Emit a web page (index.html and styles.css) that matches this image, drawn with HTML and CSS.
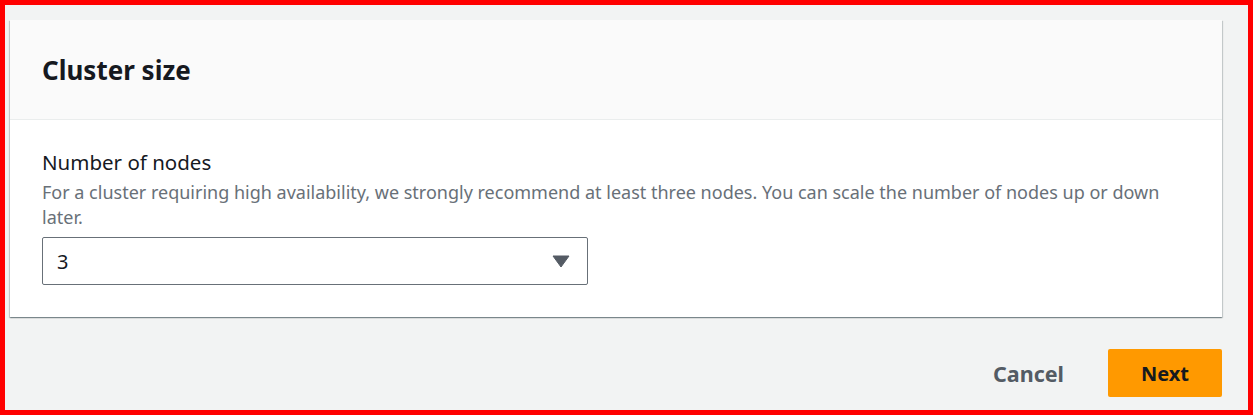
FILE: index.html
```html
<!DOCTYPE html>
<html lang="en">
<head>
    <meta charset="UTF-8">
    <title>Cluster size</title>
    <link rel="stylesheet" href="styles.css">
</head>
<body>
    <div class="frame">
        <div class="container">
            <div class="container-header">
                <h2 class="container-title">Cluster size</h2>
            </div>
            <div class="container-body">
                <div class="form-field">
                    <label class="field-label" for="node_count">Number of nodes</label>
                    <div class="field-description">For a cluster requiring high availability, we strongly recommend at least three nodes. You can scale the number of nodes up or down later.</div>
                    <div class="select" id="node_count">
                        <span class="select-value">3</span>
                        <svg class="select-caret" width="18" height="13" viewBox="0 0 18 13">
                            <path d="M1 1 H17 L9 12 Z" fill="#545b64" stroke="#545b64" stroke-width="1" stroke-linejoin="round"/>
                        </svg>
                    </div>
                </div>
            </div>
        </div>
        <div class="actions">
            <button class="btn btn-link">Cancel</button>
            <button class="btn btn-primary">Next</button>
        </div>
    </div>
</body>
</html>
```

FILE: styles.css
```css
body {
    margin: 0;
    padding: 0;
    font-family: "Noto Sans", "Open Sans", Arial, sans-serif;
    color: #16191f;
}
.frame {
    box-sizing: border-box;
    width: 1253px;
    height: 415px;
    border: 5px solid #ff0000;
    background: #f2f3f3;
    padding: 15px 26px 0 5px;
}
.container {
    background: #ffffff;
    box-shadow: 0 1px 1px 0 rgba(0, 28, 36, 0.3), 1px 1px 1px 0 rgba(0, 28, 36, 0.15), -1px 1px 1px 0 rgba(0, 28, 36, 0.15);
}
.container-header {
    background: #fafafa;
    border-bottom: 1px solid #eaeded;
    height: 100px;
    box-sizing: border-box;
    padding: 0 32px;
    display: flex;
    align-items: center;
}
.container-title {
    margin: 0;
    font-size: 26px;
    font-weight: 700;
    line-height: 32px;
}
.container-body {
    padding: 28px 32px 32px 32px;
}
.field-label {
    display: block;
    font-size: 20.5px;
    line-height: 28px;
}
.field-description {
    font-size: 18px;
    line-height: 25px;
    color: #687078;
    margin-top: 4px;
    margin-bottom: 7px;
}
.select {
    box-sizing: border-box;
    width: 546px;
    height: 48px;
    border: 1px solid #687078;
    border-radius: 2px;
    background: #ffffff;
    display: flex;
    align-items: center;
    justify-content: space-between;
    padding: 0 17px 0 14px;
}
.select-value {
    font-size: 20px;
}
.actions {
    display: flex;
    justify-content: flex-end;
    align-items: center;
    gap: 30px;
    margin-top: 32px;
}
.btn {
    font-family: inherit;
    font-size: 20px;
    font-weight: 700;
    border: none;
    height: 48px;
    cursor: pointer;
}
.btn-link {
    background: none;
    color: #545b64;
    padding: 0 14px;
    font-size: 21.5px;
}
.btn-primary {
    background: #ff9900;
    color: #16191f;
    border-radius: 2px;
    width: 114px;
}
```
